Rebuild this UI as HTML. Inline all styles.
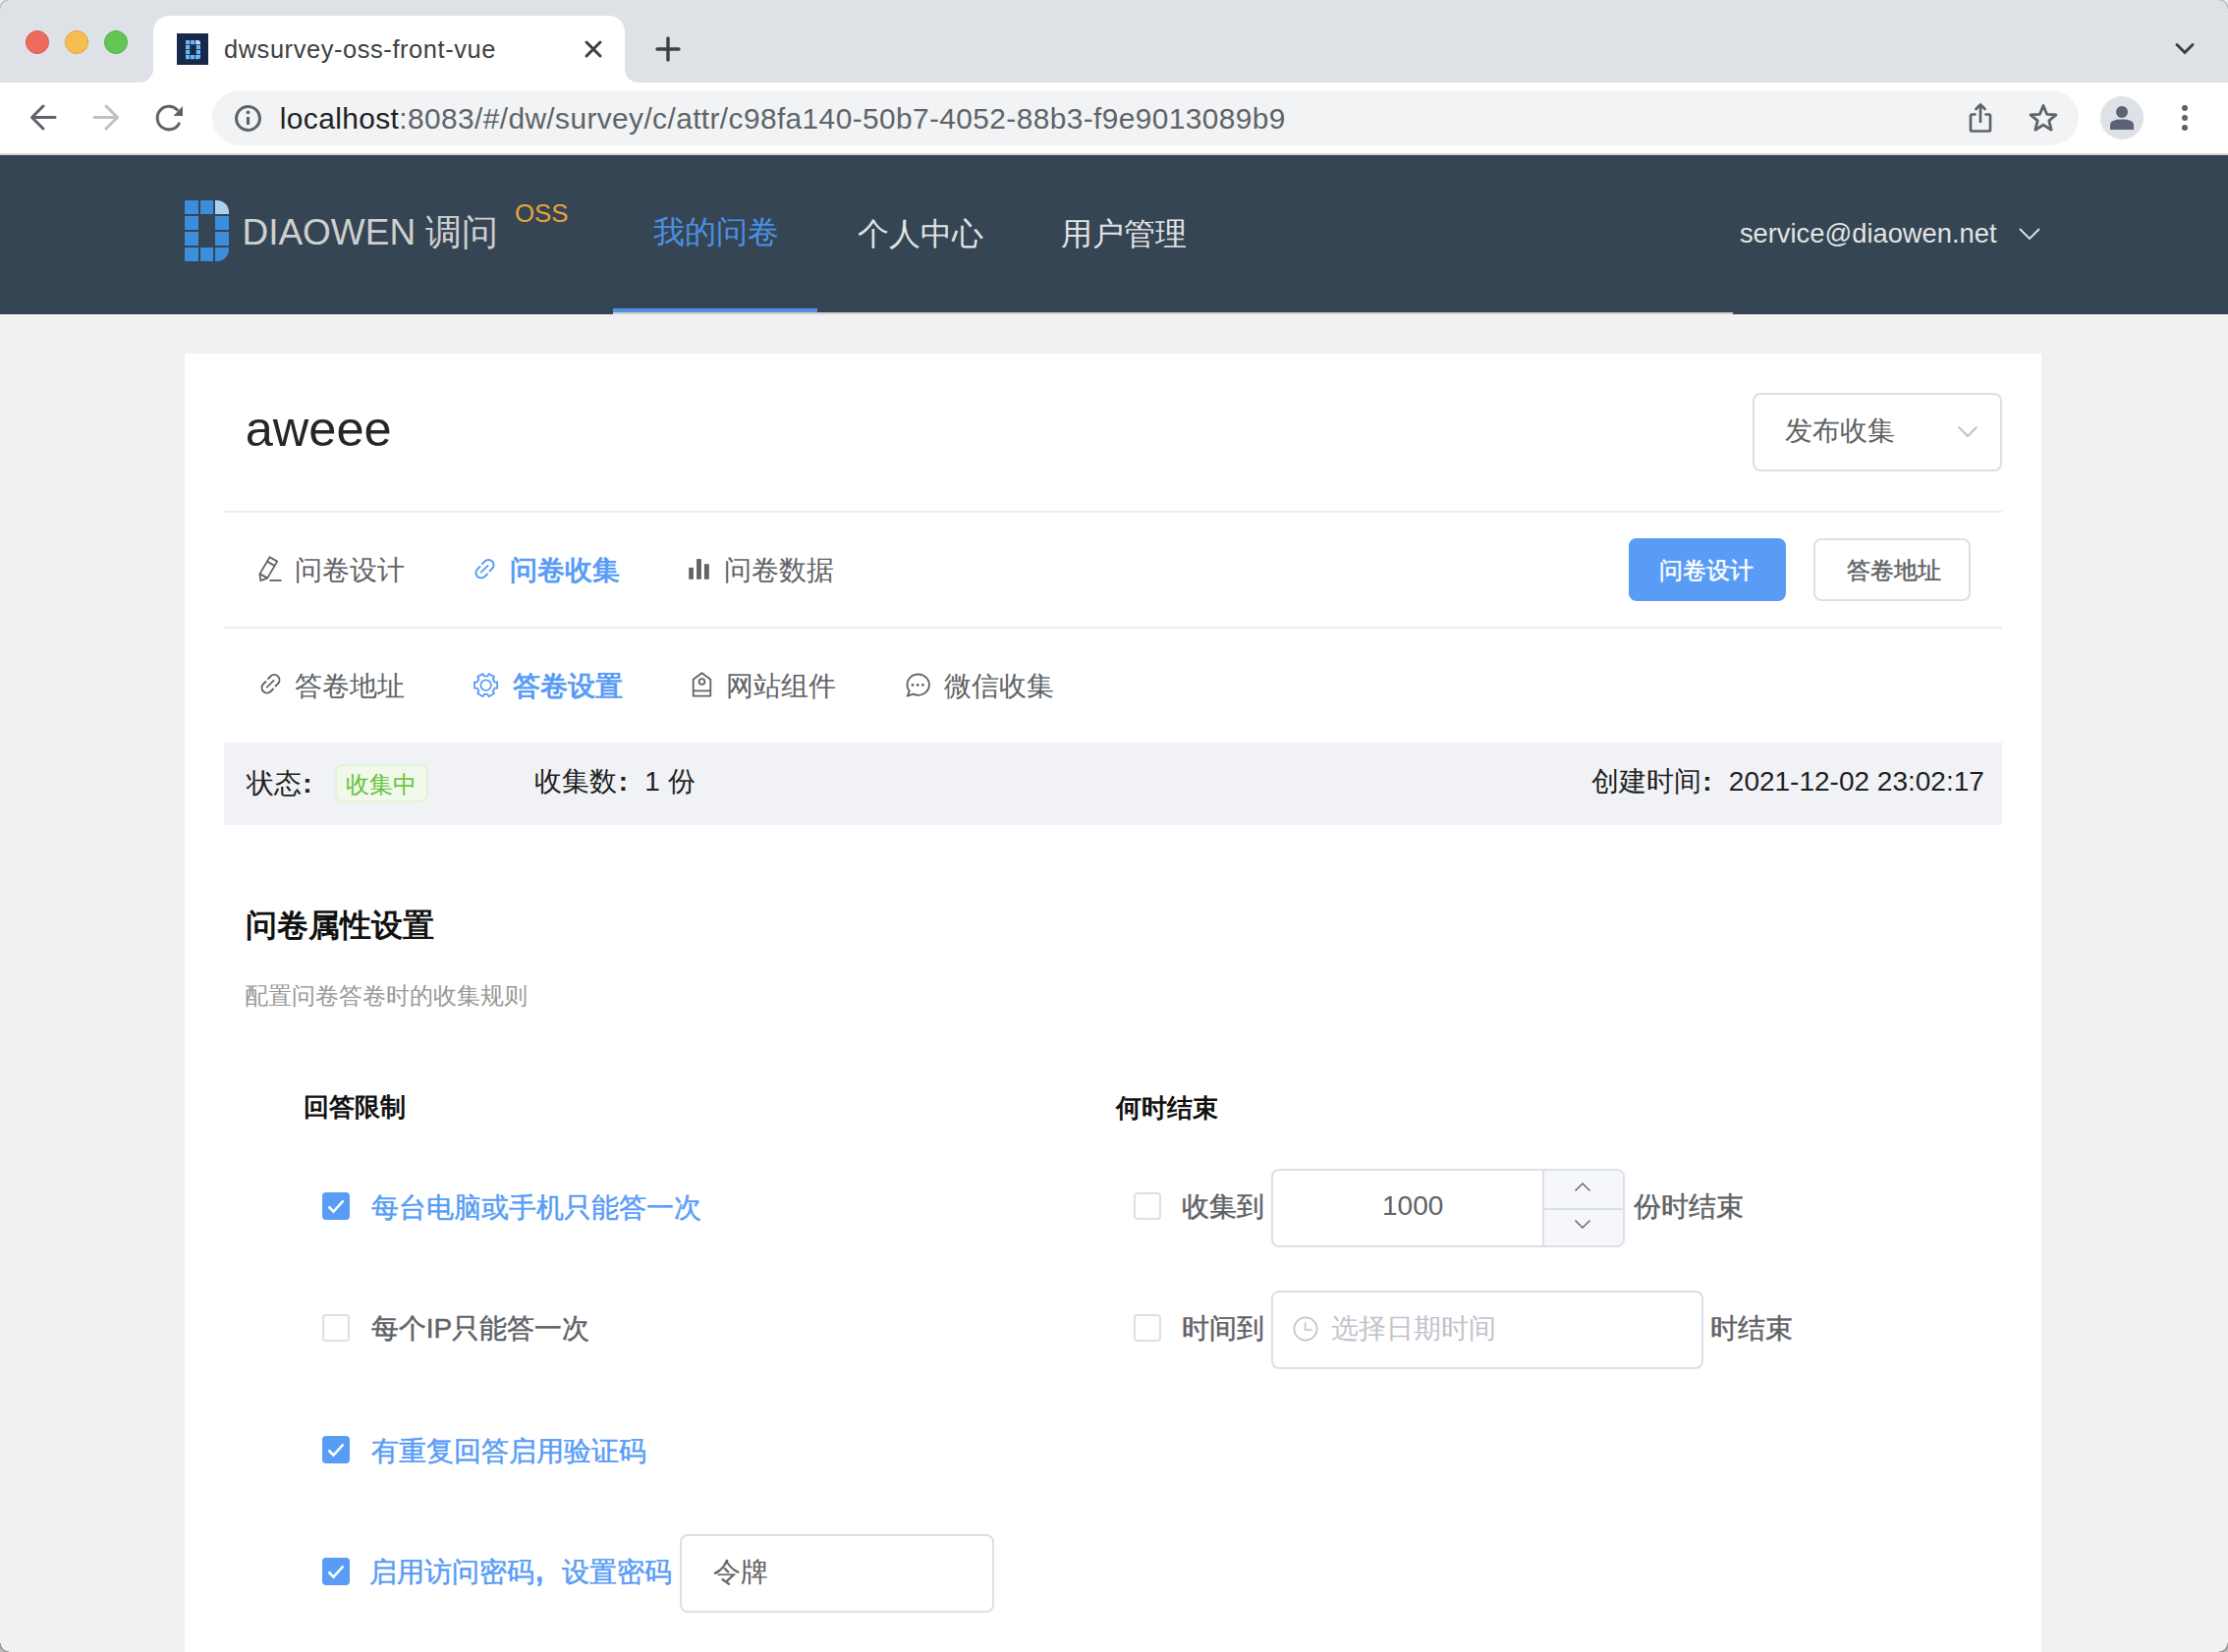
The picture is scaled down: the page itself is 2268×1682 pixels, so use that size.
<!DOCTYPE html>
<html><head><meta charset="utf-8"><title>dwsurvey-oss-front-vue</title>
<style>
html,body{margin:0;padding:0}
body{width:2268px;height:1682px;overflow:hidden;position:relative;background:#f1f1f1;font-family:"Liberation Sans",sans-serif}
.a{position:absolute}
.t{position:absolute;white-space:nowrap;line-height:1}
svg{position:absolute;overflow:visible}
.c{display:inline-block;width:1em;padding-left:0.05em;box-sizing:border-box;font-weight:700}
</style></head><body>
<!-- browser chrome -->
<div class="a" style="left:0;top:0;width:2268px;height:84px;background:#dee1e6"></div>
<div class="a" style="left:26px;top:31px;width:22px;height:22px;border-radius:50%;background:#ee6a5f;border:1px solid #d85a50"></div>
<div class="a" style="left:66px;top:31px;width:22px;height:22px;border-radius:50%;background:#f5bf4f;border:1px solid #dba540"></div>
<div class="a" style="left:106px;top:31px;width:22px;height:22px;border-radius:50%;background:#62c554;border:1px solid #52aa45"></div>
<div class="a" style="left:142px;top:70px;width:14px;height:14px;background:#fff"><div class="a" style="left:0;top:0;width:14px;height:14px;background:#dee1e6;border-bottom-right-radius:14px"></div></div>
<div class="a" style="left:636px;top:70px;width:14px;height:14px;background:#fff"><div class="a" style="left:0;top:0;width:14px;height:14px;background:#dee1e6;border-bottom-left-radius:14px"></div></div>
<div class="a" style="left:156px;top:16px;width:480px;height:68px;background:#fff;border-radius:16px 16px 0 0"></div>
<!-- favicon -->
<svg style="left:180px;top:34px" width="32" height="32" viewBox="0 0 32 32">
<rect x="0" y="0" width="32" height="32" fill="#172a4a"/>
<g fill="#6cb8f0">
<rect x="9" y="7" width="4.2" height="4.2"/><rect x="14" y="7" width="4.2" height="4.2"/><path d="M19 7h2.5a2.5 2.5 0 0 1 2.5 2.5v1.7h-5z" fill="#b5dcf7"/>
<rect x="9" y="12" width="4.2" height="4.2"/><rect x="19.8" y="12" width="4.2" height="4.2"/>
<rect x="9" y="17" width="4.2" height="4.2"/><rect x="19.8" y="17" width="4.2" height="4.2"/>
<rect x="9" y="22" width="4.2" height="4.2"/><rect x="14" y="22" width="4.2" height="4.2"/><path d="M19 22h5v1.7a2.5 2.5 0 0 1 -2.5 2.5h-2.5z"/>
</g></svg>

<div class="a" style="left:0;top:84px;width:2268px;height:72px;background:#fff"></div>
<div class="a" style="left:0;top:156px;width:2268px;height:2px;background:#d4d6d9"></div>
<div class="a" style="left:216px;top:92px;width:1900px;height:56px;border-radius:28px;background:#f1f3f4"></div>
<svg style="left:0;top:0" width="2268" height="160">
<g stroke="#3c4043" stroke-width="3" stroke-linecap="round" fill="none">
<path d="M597 43 L611 57 M611 43 L597 57"/>
<path d="M680 39 V61 M669 50 H691" stroke-width="3.4"/>
<path d="M2216 45.5 L2224 53.5 L2232 45.5" stroke-width="3"/>
</g>
<g stroke="#5f6368" stroke-width="3" stroke-linecap="round" stroke-linejoin="round" fill="none">
<path d="M56 119.5 H33 M44 108 L32.5 119.5 L44 131"/>
<path d="M96 119.5 H119 M108 108 L119.5 119.5 L108 131" stroke="#bdc1c6"/>
<path d="M182.2 125.9 A11.8 11.8 0 1 1 180.3 111.7"/>
</g>
<path d="M176.5 118 L186 118 L186 108 Z" fill="#5f6368"/>
</svg>
<svg style="left:0;top:0" width="2268" height="160">
<g stroke="#5f6368" stroke-width="3" fill="none" stroke-linecap="round" stroke-linejoin="round">
<circle cx="252.5" cy="120.5" r="12"/>
<path d="M252.5 119 V127" stroke-width="3.2" stroke-linecap="butt"/>
<path d="M2011.5 111 L2016 106.5 L2020.5 111 M2016 107.5 V124" stroke-width="2.7"/>
<path d="M2010.5 116.5 H2007.5 Q2006 116.5 2006 118 V132 Q2006 133.5 2007.5 133.5 H2024.5 Q2026 133.5 2026 132 V118 Q2026 116.5 2024.5 116.5 H2021.5" stroke-width="2.7"/>
<path d="M2080 107.5 L2083.6 116.3 L2093 116.9 L2085.8 122.9 L2088.1 132.2 L2080 127.1 L2071.9 132.2 L2074.2 122.9 L2067 116.9 L2076.4 116.3 Z" stroke-width="2.8"/>
</g>
<circle cx="252.5" cy="114.3" r="1.9" fill="#5f6368"/>
<circle cx="2160" cy="120" r="22" fill="#dee1e6"/>
<circle cx="2160" cy="114" r="6" fill="#5b6275"/>
<path d="M2148 132 V127 Q2148 121.5 2160 121.5 Q2172 121.5 2172 127 V132 Z" fill="#5b6275"/>
<g fill="#5f6368"><circle cx="2224" cy="110" r="3"/><circle cx="2224" cy="120" r="3"/><circle cx="2224" cy="130" r="3"/></g>
</svg>
<!-- app header -->
<div class="a" style="left:0;top:158px;width:2268px;height:162px;background:#354553"></div>
<div class="a" style="left:624px;top:318px;width:1140px;height:2px;background:#d0d0d0"></div>
<div class="a" style="left:624px;top:314px;width:208px;height:4px;background:#4f92e3"></div>
<svg style="left:188px;top:204px" width="46" height="62" viewBox="0 0 46 62">
<g fill="#3a8edb">
<rect x="0" y="0" width="14" height="14"/><rect x="16" y="0" width="13" height="14"/>
<rect x="0" y="16" width="14" height="14"/><rect x="31" y="16" width="14" height="14"/>
<rect x="0" y="32" width="14" height="14"/><rect x="31" y="32" width="14" height="14"/>
<rect x="0" y="48" width="14" height="14"/><rect x="16" y="48" width="13" height="14"/>
<path d="M31 48 H45 V50 A12 12 0 0 1 33 62 H31 Z"/>
</g>
<path d="M31 0 H33 A12 12 0 0 1 45 12 V14 H31 Z" fill="#a9d1f0"/>
</svg>
<svg style="left:0;top:0" width="2268" height="330">
<path d="M2056 233 L2066 243 L2076 233" stroke="#e3e3e3" stroke-width="1.8" fill="none"/>
</svg>
<!-- card -->
<div class="a" style="left:188px;top:360px;width:1890px;height:1340px;background:#fff"></div>
<div class="a" style="left:1784px;top:400px;width:250px;height:76px;border:2px solid #dcdfe6;border-radius:8px"></div>
<svg style="left:0;top:0" width="2268" height="1682">
<path d="M1993.5 434.5 L2003 444 L2012.5 434.5" stroke="#c0c4cc" stroke-width="2" fill="none"/>
</svg>
<div class="a" style="left:228px;top:520px;width:1810px;height:2px;background:#ebedf2"></div>
<div class="a" style="left:228px;top:638px;width:1810px;height:2px;background:#ebedf2"></div>
<div class="a" style="left:1658px;top:548px;width:160px;height:64px;border-radius:8px;background:#589cf6"></div>
<div class="a" style="left:1846px;top:548px;width:156px;height:60px;border-radius:8px;border:2px solid #dcdfe6;background:#fff"></div>
<!-- tab icons -->
<svg style="left:0;top:0" width="2268" height="1682">
<g stroke="#606266" stroke-width="1.8" fill="none" stroke-linejoin="round">
<path d="M274.6 567.2 L282.2 571.6 L272.2 588.6 L265.4 591.2 L264.4 584.4 Z M272.8 572.1 L278.8 575.6 M265.2 584.6 L272 588.4"/>
<path d="M274.4 591 H286.5" stroke-width="1.8"/>
</g>
<g fill="#606266">
<rect x="701.2" y="577.9" width="4.7" height="11.9"/><rect x="709.1" y="569.1" width="4.8" height="20.7"/><rect x="716.9" y="574.2" width="4.9" height="15.6"/>
</g>
<g stroke="#589cf6" stroke-width="1.9" fill="none" stroke-linecap="round">
<path d="M491 574 L493.5 571.5 A5.3 5.3 0 0 1 501 579 L498.5 581.5"/>
<path d="M488.5 577 L486 579.5 A5.3 5.3 0 0 0 493.5 587 L496 584.5"/>
<path d="M489.8 582.7 L496.6 575.9"/>
</g>
<g stroke="#606266" stroke-width="1.8" fill="none" stroke-linecap="round">
<path d="M273 691 L275.5 688.5 A5.3 5.3 0 0 1 283 696 L280.5 698.5"/>
<path d="M270.5 694 L268 696.5 A5.3 5.3 0 0 0 275.5 704 L278 701.5"/>
<path d="M271.8 699.7 L278.6 692.9"/>
</g>
<g stroke="#589cf6" stroke-width="1.8" fill="none" stroke-linejoin="round">
<path d="M503.49 700.66 L506.19 700.71 L506.19 694.49 L503.49 694.54 L501.69 691.43 L503.09 689.11 L497.71 686.01 L496.39 688.37 L492.81 688.37 L491.49 686.01 L486.11 689.11 L487.51 691.43 L485.71 694.54 L483.01 694.49 L483.01 700.71 L485.71 700.66 L487.51 703.77 L486.11 706.09 L491.49 709.19 L492.81 706.83 L496.39 706.83 L497.71 709.19 L503.09 706.09 L501.69 703.77 Z"/>
<circle cx="494.6" cy="697.6" r="5.3"/>
</g>
<g stroke="#606266" stroke-width="1.8" fill="none" stroke-linejoin="round">
<path d="M714.5 685.2 L723.3 691.8 V708.6 H705.7 V691.8 Z M705.7 703.4 H723.3"/>
<circle cx="714.5" cy="694" r="2.9"/>
<path d="M925.8 703.6 A11.2 10.6 0 1 1 929.6 706.6 L923.6 708.6 Z"/>
</g>
<g fill="#606266"><circle cx="929" cy="697.4" r="1.4"/><circle cx="934.2" cy="697.4" r="1.4"/><circle cx="939.4" cy="697.4" r="1.4"/></g>
</svg>
<!-- status bar -->
<div class="a" style="left:228px;top:756px;width:1810px;height:84px;background:#f0f2f5"></div>
<div class="a" style="left:341px;top:778px;width:91px;height:35px;border:2px solid #e1f3d8;border-radius:8px;background:#f0f9eb"></div>
<!-- checkboxes -->
<div class="a" style="left:328px;top:1214px;width:28px;height:28px;border-radius:4px;background:#589cf6"></div>
<div class="a" style="left:328px;top:1338px;width:24px;height:24px;border-radius:4px;border:2px solid #dcdfe6;background:#fff"></div>
<div class="a" style="left:328px;top:1462px;width:28px;height:28px;border-radius:4px;background:#589cf6"></div>
<div class="a" style="left:328px;top:1586px;width:28px;height:28px;border-radius:4px;background:#589cf6"></div>
<div class="a" style="left:1154px;top:1214px;width:24px;height:24px;border-radius:4px;border:2px solid #dcdfe6;background:#fff"></div>
<div class="a" style="left:1154px;top:1338px;width:24px;height:24px;border-radius:4px;border:2px solid #dcdfe6;background:#fff"></div>
<svg style="left:0;top:0" width="2268" height="1682">
<g stroke="#fff" stroke-width="2.6" fill="none">
<path d="M334.5 1228.5 L339.5 1233.5 L349.5 1222.5"/>
<path d="M334.5 1476.5 L339.5 1481.5 L349.5 1470.5"/>
<path d="M334.5 1600.5 L339.5 1605.5 L349.5 1594.5"/>
</g>
</svg>
<!-- inputs -->
<div class="a" style="left:692px;top:1562px;width:316px;height:76px;border:2px solid #dcdfe6;border-radius:8px;background:#fff"></div>
<div class="a" style="left:1294px;top:1190px;width:356px;height:76px;border:2px solid #dcdfe6;border-radius:8px;background:#fff;overflow:hidden">
<div class="a" style="left:274px;top:0;width:82px;height:76px;background:#f5f7fa;border-left:2px solid #dcdfe6"></div>
<div class="a" style="left:274px;top:38px;width:84px;height:2px;background:#dcdfe6"></div>
</div>
<div class="a" style="left:1294px;top:1314px;width:436px;height:76px;border:2px solid #dcdfe6;border-radius:8px;background:#fff"></div>
<svg style="left:0;top:0" width="2268" height="1682">
<g stroke="#606266" stroke-width="1.4" fill="none">
<path d="M1603.5 1212.5 L1611 1205 L1618.5 1212.5"/>
<path d="M1603.5 1242.5 L1611 1250 L1618.5 1242.5"/>
</g>
<g stroke="#c0c4cc" stroke-width="1.7" fill="none">
<circle cx="1329" cy="1353" r="11.6"/>
<path d="M1328.6 1346.6 V1354 H1335.5"/>
</g>
</svg>
<div id="t_tabtitle" class="t" style="left:227.94px;top:37.82px;font-size:25.40px;color:#3c4043;font-weight:400;letter-spacing:0.6px">dwsurvey-oss-front-vue</div>
<div id="t_url" class="t" style="left:284.83px;top:106.31px;font-size:29.87px;color:#5f6368;font-weight:400;letter-spacing:0.4px"><span style="color:#202124">localhost</span>:8083/#/dw/survey/c/attr/c98fa140-50b7-4052-88b3-f9e9013089b9</div>
<div id="t_brand" class="t" style="left:246.41px;top:217.89px;font-size:37.00px;color:#cfcfcf;font-weight:400;">DIAOWEN 调问</div>
<div id="t_oss" class="t" style="left:524.01px;top:205.39px;font-size:25.82px;color:#e6a23c;font-weight:400;">OSS</div>
<div id="t_nav1" class="t" style="left:664.56px;top:220.09px;font-size:32.00px;color:#4a90e2;font-weight:400;">我的问卷</div>
<div id="t_nav2" class="t" style="left:872.56px;top:221.89px;font-size:32.00px;color:#e3e3e3;font-weight:400;">个人中心</div>
<div id="t_nav3" class="t" style="left:1079.66px;top:221.89px;font-size:32.00px;color:#e3e3e3;font-weight:400;">用户管理</div>
<div id="t_email" class="t" style="left:1770.88px;top:224.26px;font-size:27.33px;color:#e3e3e3;font-weight:400;">service@diaowen.net</div>
<div id="t_title" class="t" style="left:249.72px;top:412.05px;font-size:50.55px;color:#262626;font-weight:400;">aweee</div>
<div id="t_select" class="t" style="left:1816.84px;top:425.06px;font-size:28.00px;color:#606266;font-weight:400;">发布收集</div>
<div id="t_tab1" class="t" style="left:300.46px;top:567.11px;font-size:28.00px;color:#606266;font-weight:400;">问卷设计</div>
<div id="t_tab2" class="t" style="left:518.83px;top:567.11px;font-size:28.00px;color:#589cf6;font-weight:700;">问卷收集</div>
<div id="t_tab3" class="t" style="left:737.46px;top:567.11px;font-size:28.00px;color:#606266;font-weight:400;">问卷数据</div>
<div id="t_btn1" class="t" style="left:1689.32px;top:568.60px;font-size:24.00px;color:#ffffff;font-weight:400;-webkit-text-stroke:0.45px currentColor">问卷设计</div>
<div id="t_btn2" class="t" style="left:1880.12px;top:568.60px;font-size:24.00px;color:#606266;font-weight:400;-webkit-text-stroke:0.45px currentColor">答卷地址</div>
<div id="t_sub1" class="t" style="left:300.36px;top:684.64px;font-size:28.00px;color:#606266;font-weight:400;">答卷地址</div>
<div id="t_sub2" class="t" style="left:521.79px;top:684.64px;font-size:28.00px;color:#589cf6;font-weight:700;">答卷设置</div>
<div id="t_sub3" class="t" style="left:739.09px;top:684.64px;font-size:28.00px;color:#606266;font-weight:400;">网站组件</div>
<div id="t_sub4" class="t" style="left:960.63px;top:684.64px;font-size:28.00px;color:#606266;font-weight:400;">微信收集</div>
<div id="t_st1" class="t" style="left:250.74px;top:784.06px;font-size:28.00px;color:#1f1f1f;font-weight:400;">状态<span class="c">:</span></div>
<div id="t_tag" class="t" style="left:352.48px;top:787.18px;font-size:24.00px;color:#67c23a;font-weight:400;">收集中</div>
<div id="t_st2" class="t" style="left:544.36px;top:782.48px;font-size:28.00px;color:#1f1f1f;font-weight:400;">收集数<span class="c">:</span>1 份</div>
<div id="t_st3" class="t" style="left:1619.84px;top:782.48px;font-size:28.00px;color:#1f1f1f;font-weight:400;">创建时间<span class="c">:</span>2021-12-02 23:02:17</div>
<div id="t_h1" class="t" style="left:249.61px;top:925.57px;font-size:32.00px;color:#111111;font-weight:700;">问卷属性设置</div>
<div id="t_desc" class="t" style="left:249.27px;top:1002.18px;font-size:24.00px;color:#999999;font-weight:400;">配置问卷答卷时的收集规则</div>
<div id="t_h2a" class="t" style="left:309.34px;top:1114.38px;font-size:26.00px;color:#111111;font-weight:700;">回答限制</div>
<div id="t_h2b" class="t" style="left:1135.67px;top:1115.12px;font-size:26.00px;color:#111111;font-weight:700;">何时结束</div>
<div id="t_cb1" class="t" style="left:377.84px;top:1215.96px;font-size:28.00px;color:#589cf6;font-weight:400;-webkit-text-stroke:0.45px currentColor">每台电脑或手机只能答一次</div>
<div id="t_cb2" class="t" style="left:377.84px;top:1339.06px;font-size:28.00px;color:#606266;font-weight:400;-webkit-text-stroke:0.45px currentColor">每个IP只能答一次</div>
<div id="t_cb3" class="t" style="left:377.84px;top:1463.96px;font-size:28.00px;color:#589cf6;font-weight:400;-webkit-text-stroke:0.45px currentColor">有重复回答启用验证码</div>
<div id="t_cb4" class="t" style="left:375.98px;top:1587.46px;font-size:28.00px;color:#589cf6;font-weight:400;-webkit-text-stroke:0.45px currentColor">启用访问密码<span class="c">,</span>设置密码</div>
<div id="t_pwd" class="t" style="left:726.00px;top:1587.06px;font-size:28.00px;color:#606266;font-weight:400;">令牌</div>
<div id="t_rc1" class="t" style="left:1202.84px;top:1215.06px;font-size:28.00px;color:#606266;font-weight:400;-webkit-text-stroke:0.45px currentColor">收集到</div>
<div id="t_num" class="t" style="left:1407.04px;top:1213.88px;font-size:28.00px;color:#606266;font-weight:400;">1000</div>
<div id="t_rc1b" class="t" style="left:1662.63px;top:1215.06px;font-size:28.00px;color:#606266;font-weight:400;-webkit-text-stroke:0.45px currentColor">份时结束</div>
<div id="t_rc2" class="t" style="left:1202.89px;top:1339.32px;font-size:28.00px;color:#606266;font-weight:400;-webkit-text-stroke:0.45px currentColor">时间到</div>
<div id="t_ph" class="t" style="left:1355.36px;top:1339.32px;font-size:28.00px;color:#c0c4cc;font-weight:400;">选择日期时间</div>
<div id="t_rc2b" class="t" style="left:1740.94px;top:1339.32px;font-size:28.00px;color:#606266;font-weight:400;-webkit-text-stroke:0.45px currentColor">时结束</div>
<svg style="left:0;top:0" width="2268" height="1682">
<path d="M0 0 H9 A9 9 0 0 0 0 9 Z" fill="#ececec"/><path d="M9 0 A9 9 0 0 0 0 9" stroke="#b4b6b9" stroke-width="1.2" fill="none"/>
<path d="M2268 0 H2259 A9 9 0 0 1 2268 9 Z" fill="#ececec"/><path d="M2259 0 A9 9 0 0 1 2268 9" stroke="#b4b6b9" stroke-width="1.2" fill="none"/>
<path d="M0 1682 V1673 A9 9 0 0 0 9 1682 Z" fill="#bdbdbd"/><path d="M0 1673 A9 9 0 0 0 9 1682" stroke="#8a8a8a" stroke-width="1.2" fill="none"/>
<path d="M2268 1682 V1673 A9 9 0 0 1 2259 1682 Z" fill="#bdbdbd"/><path d="M2268 1673 A9 9 0 0 1 2259 1682" stroke="#8a8a8a" stroke-width="1.2" fill="none"/>
</svg>
</body></html>
